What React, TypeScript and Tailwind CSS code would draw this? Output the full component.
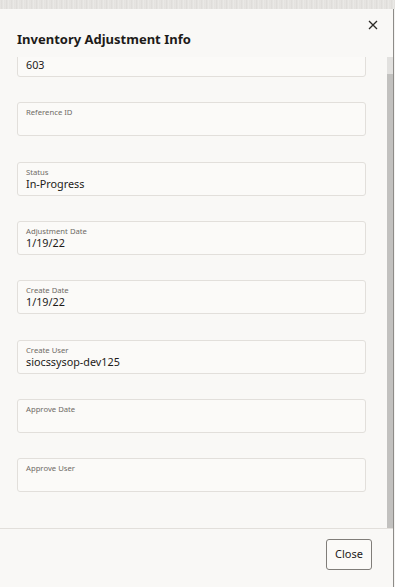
import { useEffect, useRef } from "react";

const fields: { label: string; value: string }[] = [
  { label: "", value: "603" },
  { label: "Reference ID", value: "" },
  { label: "Status", value: "In-Progress" },
  { label: "Adjustment Date", value: "1/19/22" },
  { label: "Create Date", value: "1/19/22" },
  { label: "Create User", value: "siocssysop-dev125" },
  { label: "Approve Date", value: "" },
  { label: "Approve User", value: "" },
];

function Field({ label, value }: { label: string; value: string }) {
  return (
    <div className="h-[34px] shrink-0 rounded-[3px] border border-[#e2dfdb] bg-[#fbfaf8] pl-[8px] pt-[6px] leading-none">
      <div className="h-[8px] text-[7.7px] text-[#6f6b66]">{label}</div>
      <div className="mt-[2px] text-[10.8px] text-[#1d1b19]">{value}</div>
    </div>
  );
}

export default function App() {
  const bodyRef = useRef<HTMLDivElement>(null);

  useEffect(() => {
    if (bodyRef.current) bodyRef.current.scrollTop = bodyRef.current.scrollHeight;
  }, []);

  return (
    <div
      className="flex h-[587px] w-[395px] flex-col overflow-hidden bg-[#e6e4e1]"
      style={{ fontFamily: '"Noto Sans", "Open Sans", sans-serif' }}
    >
      <div className="h-[9px] shrink-0 bg-[repeating-linear-gradient(90deg,#e9e7e4_0px,#dcdad7_2px,#ecebe8_3px,#e2e0dd_5px)]" />
      <div className="flex min-h-0 flex-1">
        <div className="flex w-[394px] flex-col border-r border-[#8d8b88] bg-[#f9f8f6]">
          <div className="relative h-[48px] shrink-0 pl-[17px] pt-[20px]">
            <h1 className="text-[13px] font-bold leading-5 text-[#1d1b19]">
              Inventory Adjustment Info
            </h1>
            <button className="absolute right-[14px] top-[10px] flex h-[12px] w-[12px] items-center justify-center text-[#2b2926]">
              <svg width="10" height="10" viewBox="0 0 10 10" fill="none" stroke="currentColor" strokeWidth="1.3">
                <path d="M1 1 L9 9 M9 1 L1 9" />
              </svg>
            </button>
          </div>
          <div className="flex min-h-0 flex-1">
            <div ref={bodyRef} className="min-w-0 flex-1 overflow-hidden">
              <div className="flex flex-col gap-[25.33px] pb-[36px] pl-[17px] pr-[21px] pt-[4px]">
                {fields.map((f, i) => (
                  <Field key={i} label={f.label} value={f.value} />
                ))}
              </div>
            </div>
            <div className="flex w-[6px] shrink-0 flex-col bg-[#e2e1df] pt-[17px]">
              <div className="flex-1 bg-[#c2c1bf]" />
            </div>
          </div>
          <div className="flex h-[59px] shrink-0 items-start justify-end border-t border-[#e2dfdb] pr-[21px] pt-[10px]">
            <button className="h-[31px] w-[46px] rounded-[3px] border border-[#807d79] bg-[#fbfaf8] text-[11px] text-[#1d1b19]">
              Close
            </button>
          </div>
        </div>
        <div className="w-[1px] bg-[#f4f3f1]" />
      </div>
    </div>
  );
}
